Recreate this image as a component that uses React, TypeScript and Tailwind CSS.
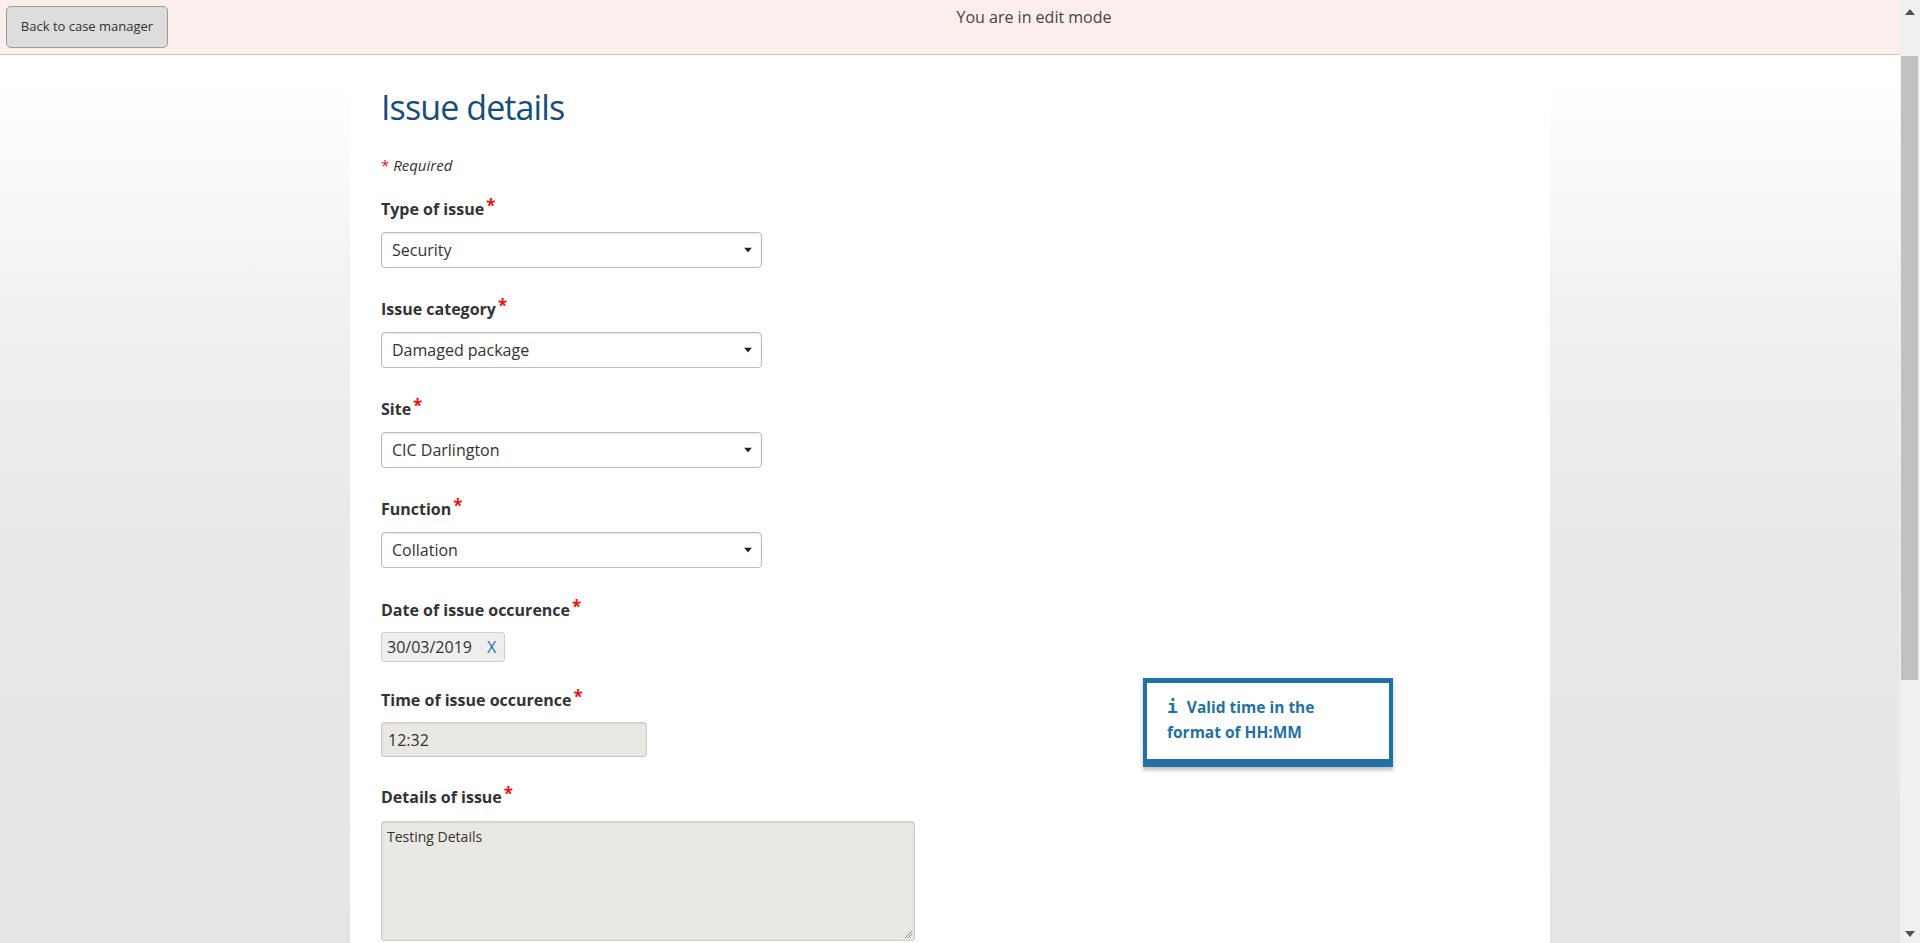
import React from "react";

const Arrow = () => (
  <svg width="8" height="5" viewBox="0 0 8 5" className="absolute right-[9px] top-1/2 -translate-y-1/2">
    <path d="M0 0 H8 L4 5 Z" fill="#222" />
  </svg>
);

const Label = ({ children }: { children: React.ReactNode }) => (
  <div className="h-[22px] leading-[22px] text-[16px] font-bold text-[#333]">
    {children}
    <span className="relative -top-[3px] ml-[2px] text-[17px] font-bold text-[#ee1111]">*</span>
  </div>
);

const Select = ({ value }: { value: string }) => (
  <div className="relative mt-[12px] flex h-[36px] w-[381px] items-center rounded-[4px] border border-[#bdbdbd] bg-white pl-[10px] text-[16px] text-[#333] shadow-[inset_0_1px_2px_rgba(0,0,0,0.12)]">
    {value}
    <Arrow />
  </div>
);

export default function App() {
  return (
    <div className="flex h-[943px] w-[1920px] overflow-hidden font-['Open_Sans','Noto_Sans',sans-serif] text-[#333]">
      <div className="flex min-w-0 flex-1 flex-col">
        <header className="flex h-[55px] shrink-0 border-b border-[#f2b9b9] bg-[#fdeeee]">
          <div className="pl-[6px] pt-[6px]">
            <button className="h-[42px] w-[162px] rounded-[5px] border border-[#9a9a9a] bg-[#dddddd] text-[13px] text-[#333]">
              Back to case manager
            </button>
          </div>
          <div className="flex-1 pt-[5px] text-center text-[16px] leading-[24px] text-[#444]">
            You are in edit mode
          </div>
        </header>
        <div className="flex flex-1 justify-center bg-[linear-gradient(to_bottom,#ffffff_0px,#ffffff_30px,#f1f1f1_250px,#e9e9e9_480px,#e5e5e5_100%)]">
          <main className="relative w-[1200px] bg-white pl-[31px] pt-[32px]">
            <h1 className="h-[40px] text-[34px] leading-[40px] font-normal tracking-[-0.9px] text-[#174e79]">Issue details</h1>
            <div className="mt-[28px] h-[20px] text-[15px] leading-[20px] italic text-[#333]">
              <span className="not-italic text-[#e8110f]">*</span> Required
            </div>

            <div className="mt-[23px]">
              <Label>Type of issue</Label>
              <Select value="Security" />
            </div>
            <div className="mt-[30px]">
              <Label>Issue category</Label>
              <Select value="Damaged package" />
            </div>
            <div className="mt-[30px]">
              <Label>Site</Label>
              <Select value="CIC Darlington" />
            </div>
            <div className="mt-[30px]">
              <Label>Function</Label>
              <Select value="Collation" />
            </div>

            <div className="mt-[31px]">
              <Label>Date of issue occurence</Label>
              <div className="mt-[11px] flex h-[30px] w-[124px] items-center rounded-[3px] border border-[#cfcfcf] bg-[#eeeeee] pl-[5px] text-[16px] text-[#333]">
                30/03/2019
                <span className="ml-[15px] text-[#2f6fb0]">X</span>
              </div>
            </div>

            <div className="mt-[27px]">
              <Label>Time of issue occurence</Label>
              <div className="mt-[11px] flex h-[35px] w-[266px] items-center rounded-[3px] border border-[#cccccc] bg-[#e9e8e2] pl-[6px] text-[16px] text-[#333] shadow-[inset_0_1px_2px_rgba(0,0,0,0.08)]">
                12:32
              </div>
            </div>

            <div className="mt-[29px]">
              <Label>Details of issue</Label>
              <div className="relative mt-[13px] h-[120px] w-[534px] rounded-[3px] border border-[#cccccc] bg-[#e9e8e2] pl-[5px] pt-[5px] text-[14px] leading-[20px] text-[#333] shadow-[inset_0_1px_2px_rgba(0,0,0,0.08)]">
                Testing Details
                <svg width="8" height="8" viewBox="0 0 8 8" className="absolute bottom-[2px] right-[2px]">
                  <path d="M1 8 L8 1 M4 8 L8 4" stroke="#888" strokeWidth="1" />
                </svg>
              </div>
            </div>

            <div className="absolute left-[793px] top-[623px] w-[250px] border-x-[4px] border-t-[5px] border-b-[8px] border-[#2371a3] bg-white pb-[14px] pl-[20px] pr-[44px] pt-[11px] text-[15.5px] font-bold leading-[25px] text-[#2371a3] shadow-[0_3px_4px_rgba(0,0,0,0.25)]">
              <span className="mr-[9px] font-['DejaVu_Sans_Mono',monospace] text-[18px]">i</span>
              Valid time in the format of HH:MM
            </div>
          </main>
        </div>
      </div>
      <div className="relative flex w-[20px] shrink-0 flex-col bg-[#f0f0f0]">
        <svg width="10" height="6" viewBox="0 0 10 6" className="absolute left-[5px] top-[9px]">
          <path d="M0 6 L5 0 L10 6 Z" fill="#505050" />
        </svg>
        <div className="absolute left-[1px] top-[56px] h-[624px] w-[17px] bg-[#c1c1c1]" />
        <svg width="10" height="6" viewBox="0 0 10 6" className="absolute bottom-[6px] left-[5px]">
          <path d="M0 0 L10 0 L5 6 Z" fill="#505050" />
        </svg>
      </div>
    </div>
  );
}
